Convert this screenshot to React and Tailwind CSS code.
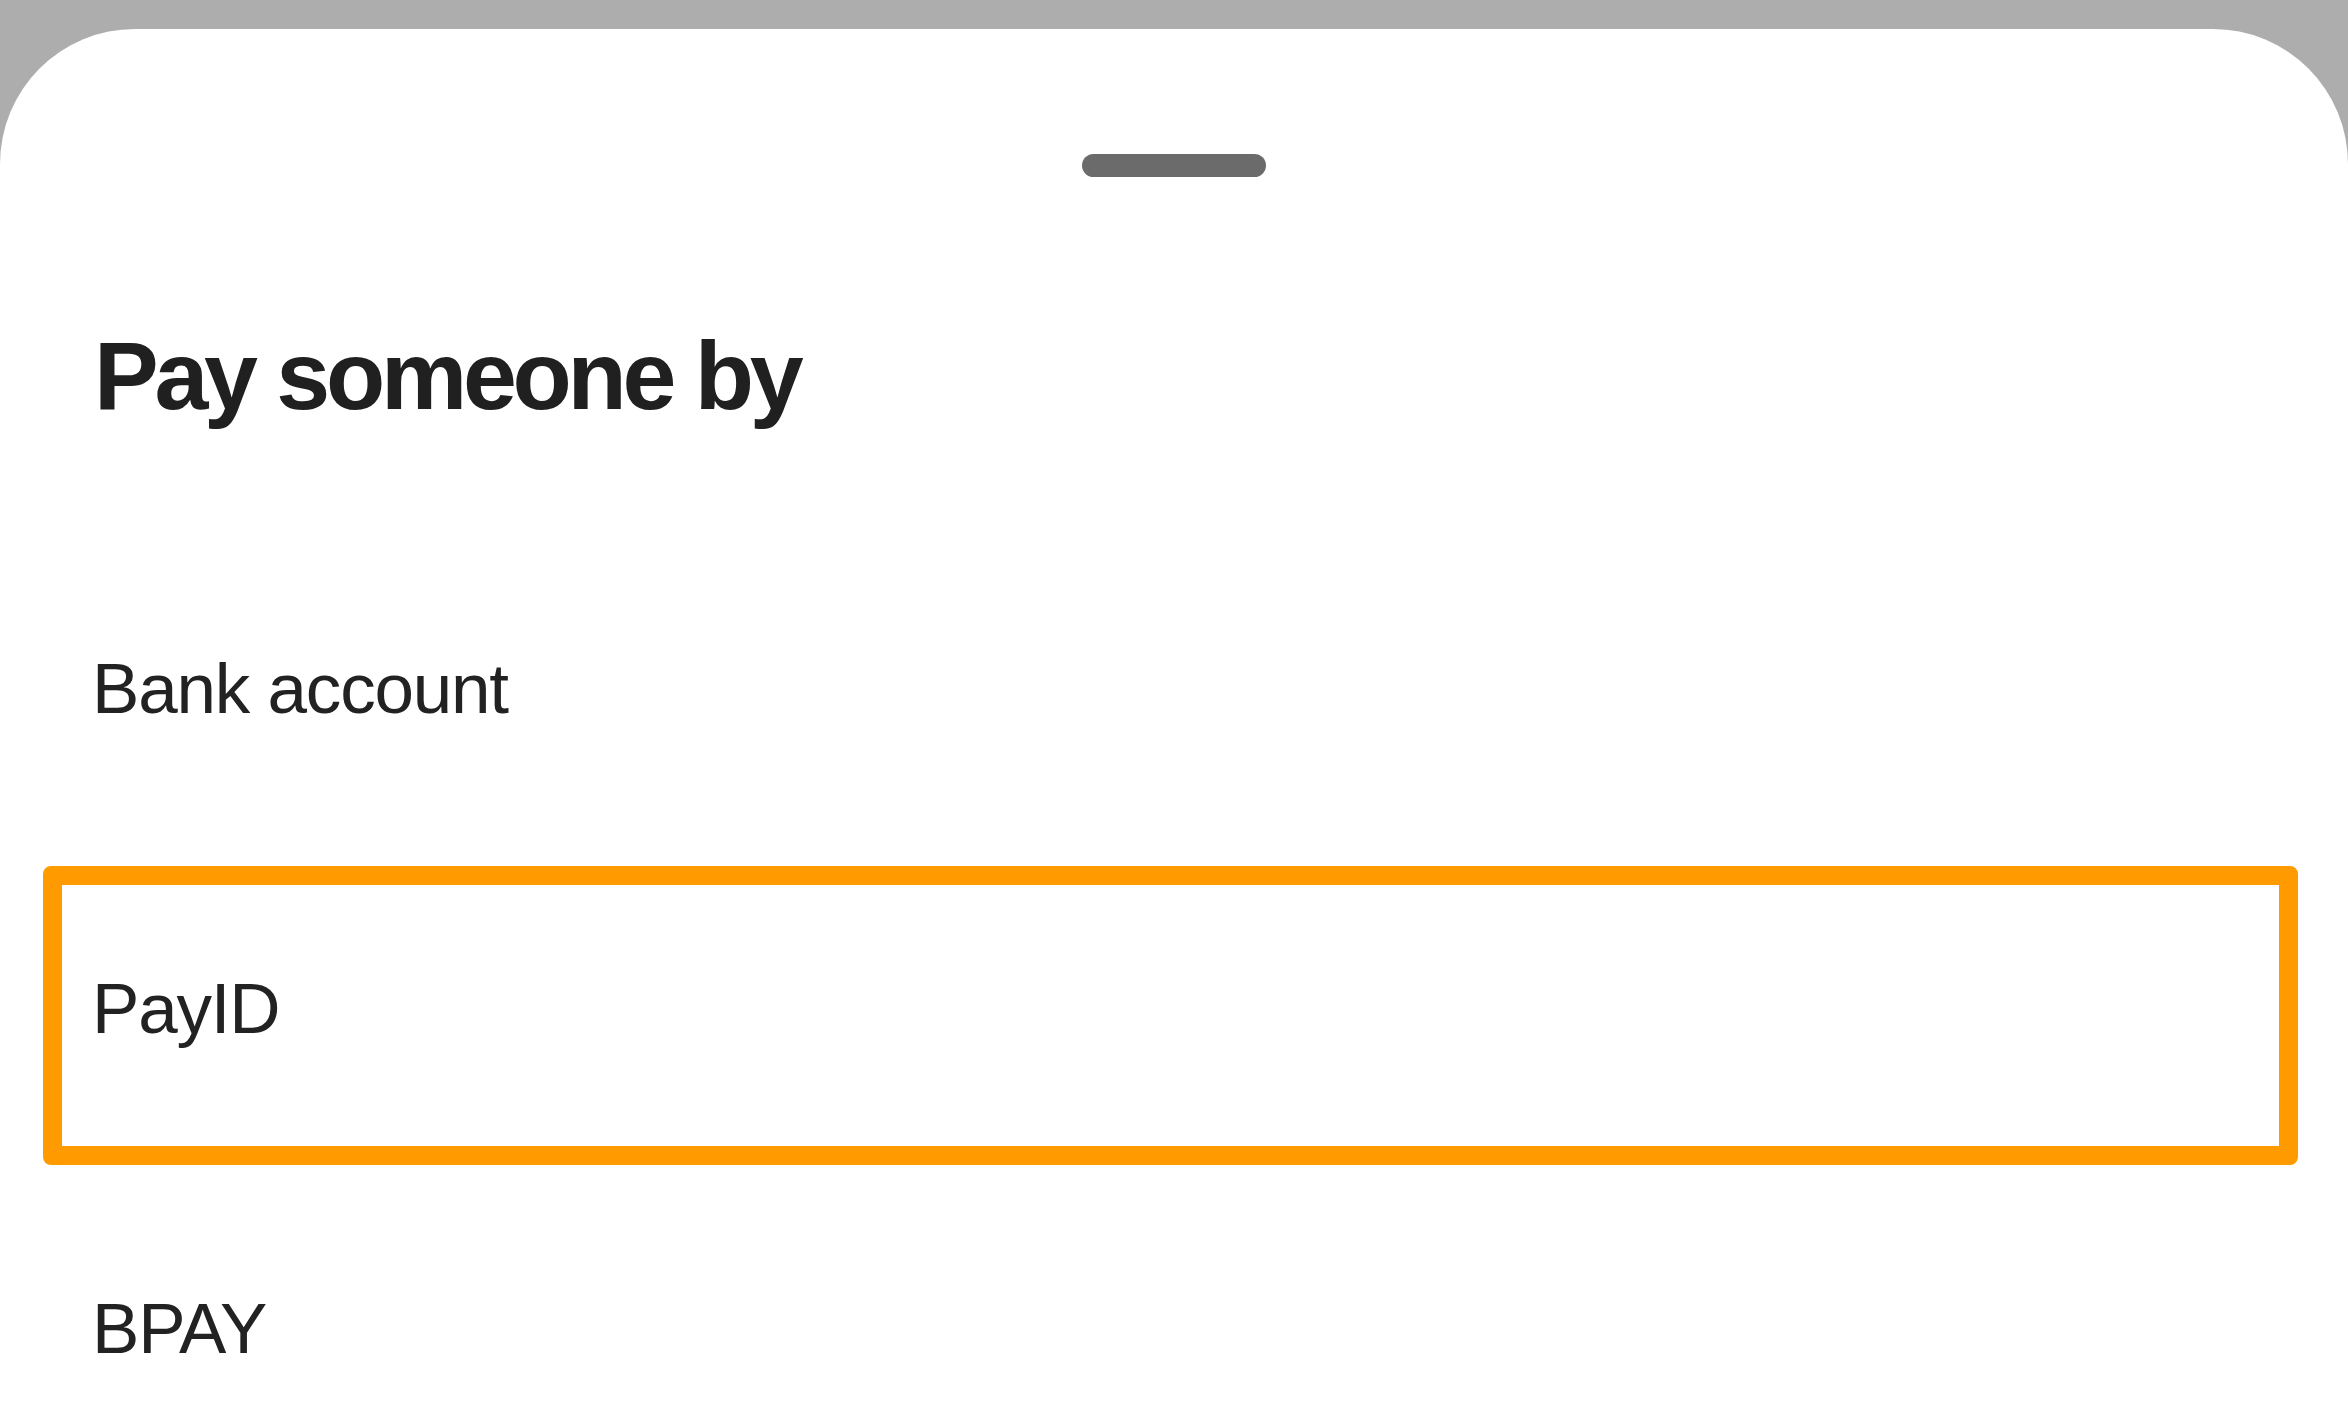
import React from 'react';

const options = [
  { id: 'bank', label: 'Bank account' },
  { id: 'payid', label: 'PayID', highlighted: true },
  { id: 'bpay', label: 'BPAY' },
];

const OptionRow = ({ label, highlighted }) => (
  <div className="relative flex h-[320px] items-center px-[92px]">
    {highlighted && (
      <span className="pointer-events-none absolute top-[18px] bottom-[3px] left-[43px] right-[50px] rounded-[8px] border-[19px] border-[#ff9a00]" />
    )}
    <span className="text-[71px] leading-none tracking-[-1.2px] text-[#222222]">{label}</span>
  </div>
);

export default function App() {
  return (
    <div
      className="h-[1422px] w-full overflow-hidden bg-[#adadad]"
      style={{ fontFamily: '"Liberation Sans", Arial, sans-serif' }}
    >
      <div className="mt-[29px] flex h-full flex-col rounded-t-[135px] bg-white">
        <div className="flex justify-center pt-[125px]">
          <div className="h-[23px] w-[184px] rounded-full bg-[#6b6b6b]" />
        </div>

        <h1 className="mt-[150px] px-[94px] text-[97px] font-bold leading-none tracking-[-4.3px] text-[#202020]">
          Pay someone by
        </h1>

        <div className="mt-[104px] flex flex-col">
          {options.map((opt) => (
            <OptionRow key={opt.id} label={opt.label} highlighted={opt.highlighted} />
          ))}
        </div>
      </div>
    </div>
  );
}
